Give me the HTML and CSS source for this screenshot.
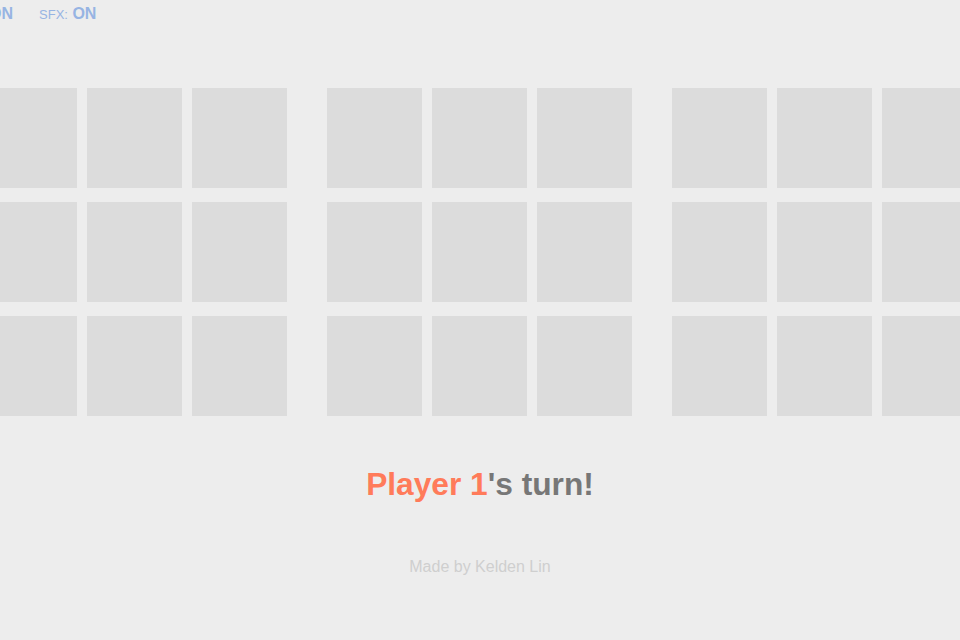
FILE: index.html
```html
<!DOCTYPE html>
<html>
<head>
<meta charset="utf-8">
<link rel="stylesheet" href="styles.css">
</head>
<body>
<div class="toggles">
  <span class="toggle"><span class="label">Music:</span> <span class="state">ON</span></span>
  <span class="toggle"><span class="label">SFX:</span> <span class="state">ON</span></span>
</div>
<div class="boards">
  <div class="board">
    <div class="cell"></div><div class="cell"></div><div class="cell"></div>
    <div class="cell"></div><div class="cell"></div><div class="cell"></div>
    <div class="cell"></div><div class="cell"></div><div class="cell"></div>
  </div>
  <div class="board">
    <div class="cell"></div><div class="cell"></div><div class="cell"></div>
    <div class="cell"></div><div class="cell"></div><div class="cell"></div>
    <div class="cell"></div><div class="cell"></div><div class="cell"></div>
  </div>
  <div class="board">
    <div class="cell"></div><div class="cell"></div><div class="cell"></div>
    <div class="cell"></div><div class="cell"></div><div class="cell"></div>
    <div class="cell"></div><div class="cell"></div><div class="cell"></div>
  </div>
</div>
<div class="status"><span class="player">Player 1</span>'s turn!</div>
<div class="credit">Made by Kelden Lin</div>
</body>
</html>
```
FILE: styles.css
```css
html, body {
  margin: 0;
  padding: 0;
  background: #ededed;
  font-family: "Liberation Sans", Arial, sans-serif;
  overflow: hidden;
  width: 960px;
  height: 640px;
}
.toggles {
  display: flex;
  gap: 26px;
  height: 28px;
  line-height: 28px;
  margin-left: -53px;
  color: #97b4e3;
  white-space: nowrap;
}
.label {
  font-size: 13px;
}
.state {
  font-size: 16px;
  font-weight: bold;
}
.boards {
  display: flex;
  justify-content: center;
  gap: 40px;
  margin-top: 60px;
  margin-left: -1px;
  width: 960px;
}
.board {
  flex: none;
  display: grid;
  grid-template-columns: repeat(3, 95px);
  grid-template-rows: repeat(3, 100px);
  column-gap: 10px;
  row-gap: 14px;
}
.cell {
  background: #dcdcdc;
}
.status {
  margin-top: 50px;
  text-align: center;
  font-size: 31.7px;
  font-weight: bold;
  line-height: 36px;
  color: #777777;
}
.player {
  color: #ff7b5a;
}
.credit {
  margin-top: 55px;
  text-align: center;
  font-size: 16px;
  line-height: 20px;
  color: #cfcfcf;
}
```
